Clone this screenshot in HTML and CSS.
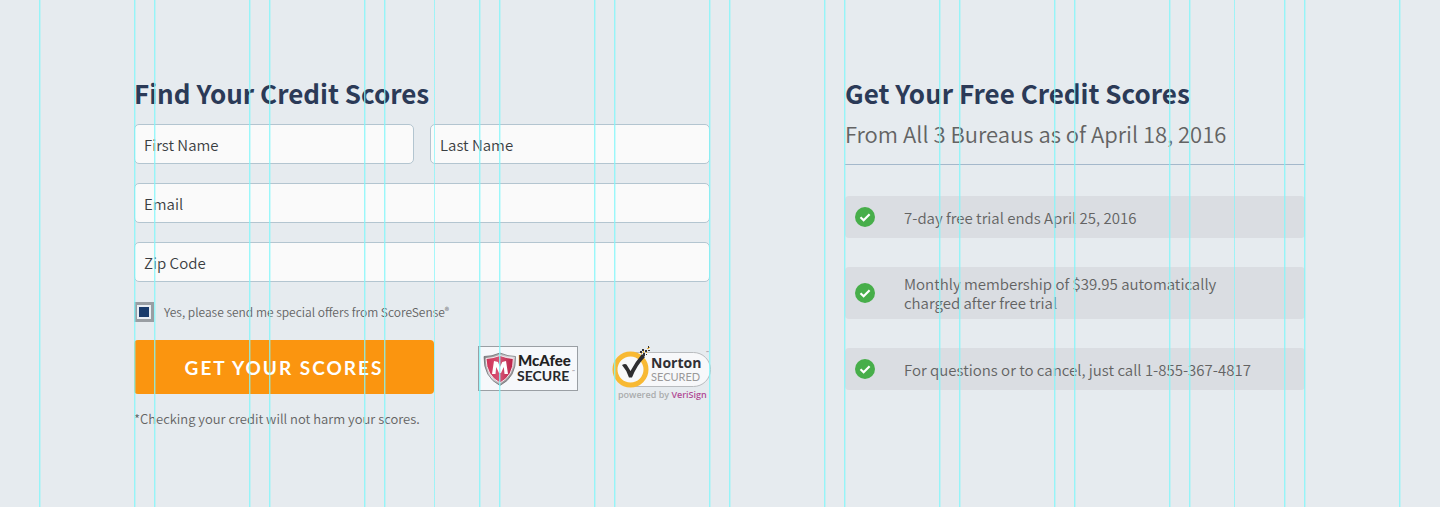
FILE: index.html
```html
<!DOCTYPE html>
<html lang="en">
<head>
<meta charset="utf-8">
<title>Find Your Credit Scores</title>
<link rel="stylesheet" href="styles.css">
</head>
<body>
<main class="page">
  <form class="signup">
    <h1 class="title">Find Your Credit Scores</h1>
    <div class="fields">
      <input class="field" type="text" placeholder="First Name" aria-label="First Name">
      <input class="field" type="text" placeholder="Last Name" aria-label="Last Name">
      <input class="field field-wide" type="email" placeholder="Email" aria-label="Email">
      <input class="field field-wide" type="text" placeholder="Zip Code" aria-label="Zip Code">
    </div>
    <div class="optin">
      <input class="check" type="checkbox" id="offers" checked>
      <label for="offers">Yes, please send me special offers from ScoreSense<span class="reg">®</span></label>
    </div>
    <div class="actions">
      <button class="submit" type="submit">GET YOUR SCORES</button>
      <svg class="mcafee" viewBox="0 0 101 46" width="101" height="46" role="img" aria-label="McAfee Secure">
        <defs>
          <linearGradient id="steel" x1="0" y1="0" x2="1" y2="1">
            <stop offset="0" stop-color="#777"/><stop offset=".5" stop-color="#e4e4e8"/><stop offset="1" stop-color="#555"/>
          </linearGradient>
          <linearGradient id="red" x1="0" y1="0" x2="1" y2="0">
            <stop offset="0" stop-color="#cf2f56"/><stop offset=".5" stop-color="#d65575"/><stop offset="1" stop-color="#b91e45"/>
          </linearGradient>
        </defs>
        <rect x=".5" y=".5" width="99" height="44" fill="#f6f8fb" stroke="#9a9fa4"/>
        <path d="M6 10.500Q14 10.500 22 7Q30 10.500 37.500 10.500Q38.500 31 22 39.500Q5.500 31 6 10.500Z" fill="url(#steel)" stroke="#66676b" stroke-width=".7"/>
        <path d="M8 12.500Q15 12.200 22 9.500Q29 12.200 35.300 12.500Q35.800 29.500 22 37Q8.200 29.500 8 12.500Z" fill="url(#red)" stroke="#f5e9ed" stroke-width="1"/>
        <path d="M14 28L16 15L20 16L22 21L24.300 16L28 15L30 28H26.500L25.800 21L23 27H21L18.200 21L17.500 28Z" fill="#fff"/>
        <text x="40" y="20" class="mcafee-name">McAfee</text>
        <text x="39" y="35" class="mcafee-secure">SECURE</text>
        <text x="94" y="27" class="tm">™</text>
      </svg>
      <svg class="norton" viewBox="0 0 98 56" width="98" height="56" role="img" aria-label="Norton Secured, powered by VeriSign">
        <path d="M20 7.500H81.500A17 17 0 0 1 81.500 41.500H20Z" fill="#f7f8fa" stroke="#b9bcbf"/>
        <circle cx="18.500" cy="24.500" r="15.500" fill="#f7f8fa" stroke="#f8b933" stroke-width="5"/>
        <path d="M10 20Q13 18.500 14.500 19.500L18.500 26Q23.500 16.500 30 9L33 12Q25 20 20 32.500H17Q14.500 25 10 20Z" fill="#2d2d30"/>
        <path d="M28 6h2v2h-2zM31 8h2v3h-2zM30 4h2v2h-2zM33 5h2v2h-2zM36 1h1v2h-1zM36 5h2v1h-2zM34 9h1v1h-1z" fill="#353336"/>
        <path d="M31 6h1v2h-1zM34 7h1v1h-1zM35 3h2v1h-2zM29 8h1v1h-1zM37 2h1v1h-1z" fill="#f0b43b"/>
        <text x="39" y="23" class="norton-name">Norton</text>
        <text x="39" y="36" class="norton-secured">SECURED</text>
        <text x="94" y="9" class="tm">™</text>
        <text x="6" y="53" class="powered">powered by <tspan class="verisign">VeriSign</tspan></text>
      </svg>
    </div>
    <p class="note">*Checking your credit will not harm your scores.</p>
  </form>

  <section class="offer">
    <h2 class="title">Get Your Free Credit Scores</h2>
    <p class="subtitle">From All 3 Bureaus as of April 18, 2016</p>
    <ul class="terms">
      <li class="term">
        <svg class="tick" viewBox="0 0 20 20" width="20" height="20" aria-hidden="true"><circle cx="10" cy="10" r="10" fill="#47ae4a"/><path d="M5.500 10.300L8.600 13.200L14.600 7.200" fill="none" stroke="#fff" stroke-width="2.200"/></svg>
        <span>7-day free trial ends April 25, 2016</span>
      </li>
      <li class="term">
        <svg class="tick" viewBox="0 0 20 20" width="20" height="20" aria-hidden="true"><circle cx="10" cy="10" r="10" fill="#47ae4a"/><path d="M5.500 10.300L8.600 13.200L14.600 7.200" fill="none" stroke="#fff" stroke-width="2.200"/></svg>
        <span>Monthly membership of $39.95 automatically charged after free trial</span>
      </li>
      <li class="term">
        <svg class="tick" viewBox="0 0 20 20" width="20" height="20" aria-hidden="true"><circle cx="10" cy="10" r="10" fill="#47ae4a"/><path d="M5.500 10.300L8.600 13.200L14.600 7.200" fill="none" stroke="#fff" stroke-width="2.200"/></svg>
        <span>For questions or to cancel, just call 1-855-367-4817</span>
      </li>
    </ul>
  </section>

  <div class="guides" aria-hidden="true">
    <i></i><i></i><i></i><i class="split"></i><i></i><i></i><i></i><i></i><i></i><i></i><i class="split split-late"></i><i></i>
  </div>
</main>
</body>
</html>
```
FILE: styles.css
```css
* { box-sizing: border-box; }

body {
  margin: 0;
  background: #e6ebef;
  color: #636363;
  font-family: "Noto Sans CJK SC", "Noto Sans", sans-serif;
  font-size: 15px;
}

h1, h2, p, ul { margin: 0; padding: 0; }

.page {
  position: relative;
  display: grid;
  grid-template-columns: 576fr 460fr;
  column-gap: 135px;
  min-height: 100vh;
  padding: 76px 135px 76px 134px;
}

.title {
  color: #2b3a57;
  font-size: 26px;
  font-weight: 700;
  line-height: 34px;
}

.signup .title { margin-bottom: 14px; }

.fields {
  display: grid;
  grid-template-columns: 1fr 1fr;
  gap: 19px 16px;
}

.field {
  width: 100%;
  height: 40px;
  padding: 0 9px;
  border: 1px solid #b3c5d0;
  border-radius: 5px;
  background: #fafafa;
  color: #3a3e42;
  font-family: inherit;
  font-size: 15px;
  font-weight: 350;
}

.field::placeholder { color: #3a3e42; opacity: 1; }

.field-wide { grid-column: 1 / -1; }

.optin {
  display: flex;
  align-items: center;
  gap: 10px;
  margin-top: 20px;
  font-size: 12px;
  font-weight: 350;
  line-height: 20px;
}

.check {
  appearance: none;
  width: 20px;
  height: 20px;
  margin: 0;
  border: 3px solid #999ea3;
  background: #fff;
}

.check:checked {
  background: #183a6b;
  box-shadow: inset 0 0 0 2px #e9eef4;
}

.reg { font-size: 9px; vertical-align: 3px; line-height: 1; }

.actions {
  display: flex;
  align-items: flex-start;
  margin-top: 18px;
}

.submit {
  width: 300px;
  height: 54px;
  padding: 0;
  border: 0;
  border-radius: 4px;
  background: #fb950f;
  color: #fff;
  font-family: Lato, sans-serif;
  font-size: 19px;
  font-weight: 700;
  letter-spacing: 2px;
}

.mcafee { margin: 6px 33px 0 44px; }
.norton { margin-top: 5px; overflow: visible; }

.mcafee-name { font: 900 15px Lato, sans-serif; fill: #222; }
.mcafee-secure { font: 700 14px Lato, sans-serif; fill: #28292b; }
.tm { font: 4px Lato, sans-serif; fill: #777; }
.norton-name { font: 700 14px "Open Sans", sans-serif; fill: #303034; }
.norton-secured { font: 11px Lato, sans-serif; fill: #999; }
.powered { font: 600 9px "Open Sans", sans-serif; fill: #aaabad; }
.verisign { fill: #b04a95; }

.note {
  margin-top: 8px;
  font-size: 13px;
  font-weight: 350;
  line-height: 20px;
}

.offer .title { line-height: 33px; }

.subtitle {
  padding: 8px 0 15px;
  border-bottom: 1px solid #a4b8cb;
  font-size: 22px;
  font-weight: 350;
  line-height: 32px;
}

.terms {
  display: grid;
  gap: 29px;
  margin-top: 31px;
  list-style: none;
}

.term {
  display: flex;
  align-items: center;
  gap: 29px;
  min-height: 42px;
  padding: 7px 80px 7px 10px;
  border-radius: 4px;
  background: #dadde2;
  font-size: 15px;
  font-weight: 350;
  line-height: 19px;
}

.tick { flex: none; }

.term:last-child { padding-right: 10px; }

.guides {
  position: absolute;
  inset: 0;
  display: grid;
  grid-template-columns: repeat(12, 1fr);
  column-gap: 19px;
  padding: 0 40px 0 39px;
  pointer-events: none;
}

.guides i {
  border: solid rgba(130, 246, 250, 0.8);
  border-width: 0 1px;
  box-shadow: 1px 0 rgba(130, 246, 250, 0.35), inset 1px 0 rgba(130, 246, 250, 0.35);
}

.split {
  background: linear-gradient(rgba(130, 246, 250, 0.7), rgba(130, 246, 250, 0.7)) 53% 0 / 1px 100% no-repeat;
}

.split-late { background-position-x: 47%; }
```
